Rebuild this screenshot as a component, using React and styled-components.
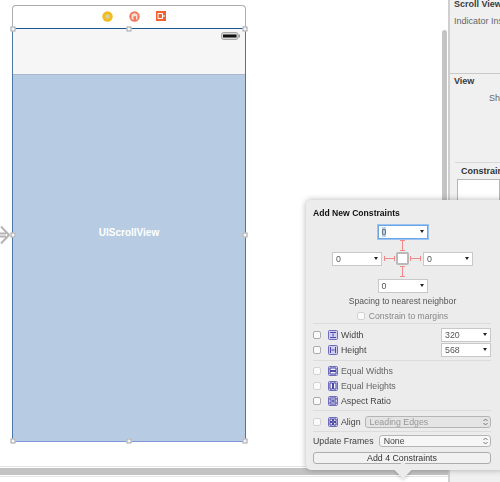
import React from 'react';
import styled, { createGlobalStyle } from 'styled-components';

const GlobalStyle = createGlobalStyle`
  html, body {
    margin: 0;
    background: #fff;
    overflow: hidden;
  }
  * { box-sizing: border-box; }
`;

const Page = styled.div`
  position: relative;
  width: 500px;
  height: 482px;
  display: grid;
  grid-template-columns: 450px 1fr;
  font-family: 'Liberation Sans', Arial, sans-serif;
  color: #333;
  overflow: hidden;
  filter: blur(0.35px);
`;

const Canvas = styled.div`
  display: flex;
  flex-direction: column;
  border-right: 2px solid #cfcfcf;
`;

const CanvasBody = styled.div`
  position: relative;
  height: 467px;
  display: flex;
  border-bottom: 1px solid #e4e4e4;
  padding: 5px 3px 0 12px;
`;

const Scene = styled.div`
  width: 234px;
  display: flex;
  flex-direction: column;
`;

const Dock = styled.div`
  height: 23px;
  border: 1px solid #adadad;
  border-bottom: 0;
  border-radius: 4px 4px 0 0;
  display: flex;
  align-items: center;
  justify-content: center;
  gap: 16px;
  padding: 0 0 2px 10px;
`;

const Device = styled.div`
  position: relative;
  height: 414px;
  display: flex;
  flex-direction: column;
  border: 1px solid #4a76a5;
  border-top: 1px solid #17568f;
  border-bottom-color: #7e96db;
`;

const StatusBar = styled.div`
  height: 46px;
  background: #f6f6f6;
  border-bottom: 1px solid #a9b8cc;
  display: flex;
  justify-content: flex-end;
  padding: 3px 5px 0 0;
`;

const ScrollArea = styled.div`
  flex: 1;
  background: #b7cce3;
  display: flex;
  align-items: center;
  justify-content: center;
  color: #fff;
  font-size: 10px;
  font-weight: 700;
  padding-bottom: 52px;
`;

const Handle = styled.span`
  position: absolute;
  width: 5px;
  height: 5px;
  background: #f6f6f6;
  border: 1px solid #a2a6ad;
  left: ${(p) => p.$x};
  top: ${(p) => p.$y};
  transform: translate(-50%, -50%);
`;

const EntryArrow = styled.svg`
  position: absolute;
  left: 0;
  top: 225px;
`;

const VerticalScroller = styled.div`
  position: absolute;
  left: 442px;
  top: 30px;
  bottom: 2px;
  width: 5px;
  background: #c4c4c4;
  border-radius: 3px 3px 0 0;
`;

const HorizontalScroller = styled.div`
  height: 7px;
  margin-top: 1px;
  background: #c3c3c3;
`;

const BottomRule = styled.div`
  height: 1px;
  margin-top: 1px;
  background: #e6e6e6;
`;

const Inspector = styled.div`
  background: #f0f0f0;
  display: flex;
  flex-direction: column;
  font-size: 9px;
  overflow: hidden;
  white-space: nowrap;
`;

const InspectorBlock = styled.div`
  height: 75px;
  border-bottom: 1px solid #c9c9c9;
  margin-top: -1px;
`;

const InspectorTitle = styled.div`
  font-weight: 700;
  color: #3c3c3c;
  line-height: 11px;
  padding-left: 4px;
  margin-top: ${(p) => p.$top || 0}px;
`;

const InspectorText = styled.div`
  color: #666;
  line-height: 11px;
  margin-top: ${(p) => p.$top}px;
  margin-left: ${(p) => p.$left}px;
`;

const ConstraintsLabel = styled.div`
  margin: 58px 0 0 5px;
  padding: 3px 0 0 6px;
  border-top: 1px solid #d8d8d8;
  font-weight: 700;
  line-height: 11px;
`;

const ConstraintsBox = styled.div`
  margin: 2px 0 0 7px;
  height: 100px;
  background: #fff;
  border: 1px solid #b5b5b5;
`;

const Popover = styled.div`
  position: absolute;
  left: 306px;
  top: 200px;
  width: 200px;
  height: 270px;
  background: #ececec;
  border-radius: 5px;
  box-shadow: 0 0 6px rgba(0, 0, 0, 0.3);
  padding: 7px 9px 0 7px;
  font-size: 8.8px;
  color: #3f3f3f;
`;

const PopoverTip = styled.div`
  position: absolute;
  left: 91px;
  bottom: -6px;
  width: 12px;
  height: 12px;
  background: #ececec;
  transform: rotate(45deg);
  box-shadow: 2px 2px 3px rgba(0, 0, 0, 0.12);
`;

const PopoverContent = styled.div`
  position: relative;
  width: 178px;
  display: flex;
  flex-direction: column;
`;

const PopoverTitle = styled.div`
  font-weight: 700;
  font-size: 8.6px;
  color: #111;
  line-height: 12px;
`;

const PinGrid = styled.div`
  display: grid;
  grid-template-columns: 50px 41px 50px;
  grid-template-rows: 15px 39px 15px;
  justify-content: start;
  margin: 5px 0 0 19px;
`;

const PinCell = styled.div`
  grid-column: ${(p) => p.$col};
  grid-row: ${(p) => p.$row};
  display: flex;
  flex-direction: ${(p) => p.$direction || 'row'};
  align-items: center;
  justify-content: center;
`;

const PinCenter = styled.div`
  display: flex;
  align-items: center;
  gap: 1px;
  margin: 1px 0;
`;

const Field = styled.div`
  width: 50px;
  height: 14px;
  flex: none;
  background: #fff;
  border: 1px solid #c8c8c8;
  display: flex;
  align-items: center;
  justify-content: space-between;
  padding: 0 3px;
  color: #555;
  ${(p) => p.$focused && 'border: 1px solid #6ca4e8; box-shadow: 0 0 0 1px #9cc4f2;'}
`;

const Selected = styled.span`
  background: #b5d3f7;
`;

const Caret = styled.span`
  width: 0;
  height: 0;
  border-left: 2.5px solid transparent;
  border-right: 2.5px solid transparent;
  border-top: 3px solid #222;
`;

const PinBox = styled.div`
  width: 13px;
  height: 13px;
  background: #fff;
  border: 2px solid #b9b9b9;
  border-radius: 2px;
  flex: none;
`;

const HintText = styled.div`
  color: ${(p) => (p.$muted ? '#888' : '#555')};
  font-size: 8.6px;
  line-height: 12px;
  margin: ${(p) => p.$top}px 0 0 1px;
  display: flex;
  align-items: center;
  justify-content: center;
  gap: 4px;
`;

const Divider = styled.div`
  height: 1px;
  background: #dcdcdc;
  margin: ${(p) => p.$top}px 0 ${(p) => p.$bottom}px;
`;

const Row = styled.div`
  height: ${(p) => p.$height || 15}px;
  display: flex;
  align-items: center;
  gap: ${(p) => p.$gap || 7}px;
`;

const Check = styled.span`
  width: 8px;
  height: 8px;
  flex: none;
  background: #fafafa;
  border: 1px solid ${(p) => (p.$faint ? '#d2d2d2' : '#ababab')};
  border-radius: 2px;
`;

const RowLabel = styled.span`
  margin-left: -4px;
  flex: ${(p) => (p.$fit ? 'none' : 1)};
  color: ${(p) => (p.$faint ? '#666' : '#444')};
`;

const AlignLabel = styled(RowLabel)`
  margin-right: -3px;
`;

const StepSelect = styled.div`
  flex: 1;
  height: 12px;
  border: 1px solid #b5b5b5;
  border-radius: 3px;
  background: ${(p) => (p.$disabled ? '#e4e4e4' : '#f6f6f6')};
  color: ${(p) => (p.$disabled ? '#999' : '#444')};
  display: flex;
  align-items: center;
  justify-content: space-between;
  padding: 0 2px 0 4px;
`;

const AddButton = styled.div`
  height: 12px;
  margin-top: 4px;
  border: 1px solid #adadad;
  border-radius: 3px;
  background: #f1f1f1;
  color: #333;
  display: flex;
  align-items: center;
  justify-content: center;
`;

const IconSvg = styled.svg`
  flex: none;
`;

const Strut = ({ vertical }) => (
  <IconSvg width={vertical ? 7 : 11} height={vertical ? 11 : 7} viewBox={vertical ? '0 0 7 11' : '0 0 11 7'}>
    <path
      d={vertical ? 'M1 .5H6M3.5 .5V10.5M1 10.5H6' : 'M.5 1V6M.5 3.5H10.5M10.5 1V6'}
      stroke="#f08a8a"
      fill="none"
    />
  </IconSvg>
);

const Stepper = () => (
  <svg width="5" height="8" viewBox="0 0 5 8">
    <path d="M.5 3 2.5 1 4.5 3M.5 5 2.5 7 4.5 5" stroke="#777" fill="none" />
  </svg>
);

const glyphs = {
  width: 'M2 2.5H8M2 7.5H8M5 3.5V6.5',
  height: 'M2.5 2V8M7.5 2V8M3.5 5H6.5',
  equalW: 'M2 2H8V4.5H2ZM2 5.5H8V8H2Z',
  equalH: 'M2 2H4.5V8H2ZM5.5 2H8V8H5.5Z',
  ratio: 'M2 2H8V4H2ZM2 6H8V8H2ZM5 4V6',
  align: 'M2 2H4.5V4.5H2ZM5.5 2H8V4.5H5.5ZM2 5.5H4.5V8H2ZM5.5 5.5H8V8H5.5Z',
};

const ConstraintIcon = ({ kind }) => (
  <IconSvg width="10" height="10" viewBox="0 0 10 10">
    <rect x=".5" y=".5" width="9" height="9" rx="1" fill="#cfcdf0" stroke="#6f6bbd" />
    <path d={glyphs[kind]} stroke="#4d49a0" fill="#f2f2fb" strokeWidth="1" />
  </IconSvg>
);

const DockIcons = () => (
  <>
    <svg width="11" height="11" viewBox="0 0 11 11">
      <circle cx="5.5" cy="5.5" r="5.2" fill="#f1bd1c" />
      <circle cx="5.5" cy="5.5" r="2.2" fill="#d8cfa2" />
    </svg>
    <svg width="11" height="11" viewBox="0 0 11 11">
      <circle cx="5.5" cy="5.5" r="5.2" fill="#f0795c" />
      <path d="M2.5 3.5 5.5 2 8.5 3.5V8L7 9V5L5.5 5.5 4.5 5V9L2.5 8Z" fill="#fff" opacity=".75" />
    </svg>
    <svg width="10" height="10" viewBox="0 0 10 10">
      <rect width="10" height="10" fill="#f2622f" />
      <path d="M2 2.5H6.5V7.5H2Z" fill="none" stroke="#fff" />
      <path d="M6.5 5H9" stroke="#fff" />
    </svg>
  </>
);

const Battery = () => (
  <svg width="19" height="8" viewBox="0 0 19 8">
    <rect x=".5" y=".5" width="16.5" height="7" rx="2" fill="#d8d8d8" stroke="#a5a5a5" />
    <rect x="2" y="2.5" width="13.5" height="3" fill="#111" />
    <rect x="17.5" y="2.5" width="1.5" height="3" fill="#999" />
  </svg>
);

const App = () => (
  <>
    <GlobalStyle />
    <Page>
      <Canvas>
        <CanvasBody>
          <EntryArrow width="10" height="20" viewBox="0 0 10 20">
            <path d="M0 8.5H6M0 11.5H6M1 1.5 9 10 1 18.5" stroke="#b4b4b4" strokeWidth="2" fill="none" />
          </EntryArrow>
          <Scene>
            <Dock>
              <DockIcons />
            </Dock>
            <Device>
              <Handle $x="0%" $y="0%" />
              <Handle $x="50%" $y="0%" />
              <Handle $x="100%" $y="0%" />
              <Handle $x="0%" $y="50%" />
              <Handle $x="100%" $y="50%" />
              <Handle $x="0%" $y="100%" />
              <Handle $x="50%" $y="100%" />
              <Handle $x="100%" $y="100%" />
              <StatusBar>
                <Battery />
              </StatusBar>
              <ScrollArea>UIScrollView</ScrollArea>
            </Device>
          </Scene>
          <VerticalScroller />
        </CanvasBody>
        <HorizontalScroller />
        <BottomRule />
      </Canvas>
      <Inspector>
        <InspectorBlock>
          <InspectorTitle>Scroll View</InspectorTitle>
          <InspectorText $top={6} $left={4}>Indicator Insets</InspectorText>
        </InspectorBlock>
        <InspectorTitle $top={2}>View</InspectorTitle>
        <InspectorText $top={6} $left={39}>Show</InspectorText>
        <ConstraintsLabel>Constraints</ConstraintsLabel>
        <ConstraintsBox />
      </Inspector>
      <Popover>
        <PopoverContent>
          <PopoverTitle>Add New Constraints</PopoverTitle>
          <PinGrid>
            <PinCell $col="2" $row="1">
              <Field $focused>
                <Selected>0</Selected>
                <Caret />
              </Field>
            </PinCell>
            <PinCell $col="1" $row="2">
              <Field>
                0
                <Caret />
              </Field>
            </PinCell>
            <PinCell $col="2" $row="2" $direction="column">
              <Strut vertical />
              <PinCenter>
                <Strut />
                <PinBox />
                <Strut />
              </PinCenter>
              <Strut vertical />
            </PinCell>
            <PinCell $col="3" $row="2">
              <Field>
                0
                <Caret />
              </Field>
            </PinCell>
            <PinCell $col="2" $row="3">
              <Field>
                0
                <Caret />
              </Field>
            </PinCell>
          </PinGrid>
          <HintText $top={2}>Spacing to nearest neighbor</HintText>
          <HintText $top={3} $muted>
            <Check $faint />
            Constrain to margins
          </HintText>
          <Divider $top={1} $bottom={3} />
          <Row>
            <Check />
            <ConstraintIcon kind="width" />
            <RowLabel>Width</RowLabel>
            <Field>
              320
              <Caret />
            </Field>
          </Row>
          <Row>
            <Check />
            <ConstraintIcon kind="height" />
            <RowLabel>Height</RowLabel>
            <Field>
              568
              <Caret />
            </Field>
          </Row>
          <Divider $top={3} $bottom={2} />
          <Row>
            <Check $faint />
            <ConstraintIcon kind="equalW" />
            <RowLabel $faint>Equal Widths</RowLabel>
          </Row>
          <Row>
            <Check $faint />
            <ConstraintIcon kind="equalH" />
            <RowLabel $faint>Equal Heights</RowLabel>
          </Row>
          <Row>
            <Check />
            <ConstraintIcon kind="ratio" />
            <RowLabel>Aspect Ratio</RowLabel>
          </Row>
          <Divider $top={2} $bottom={3} />
          <Row>
            <Check $faint />
            <ConstraintIcon kind="align" />
            <AlignLabel $fit>Align</AlignLabel>
            <StepSelect $disabled>
              Leading Edges
              <Stepper />
            </StepSelect>
          </Row>
          <Divider $top={2} $bottom={2} />
          <Row $height={14} $gap={5}>
            <span>Update Frames</span>
            <StepSelect>
              None
              <Stepper />
            </StepSelect>
          </Row>
          <AddButton>Add 4 Constraints</AddButton>
        </PopoverContent>
        <PopoverTip />
      </Popover>
    </Page>
  </>
);

export default App;
